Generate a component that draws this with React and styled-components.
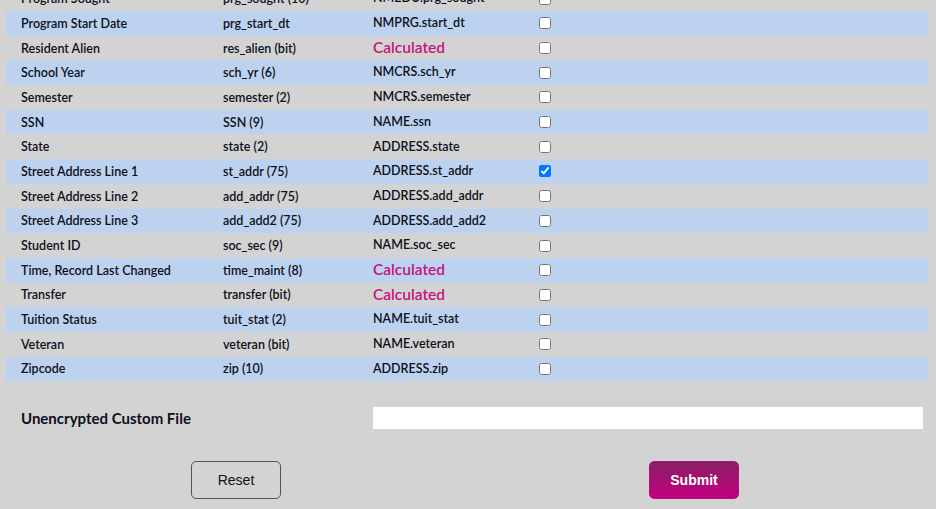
import React from 'react';
import styled, { createGlobalStyle } from 'styled-components';

const GlobalStyle = createGlobalStyle`
    body {
        margin: 0;
        background: #d3d3d3;
        font-family: Lato, "Open Sans", sans-serif;
        color: #0f0f1a;
    }
`;

const Page = styled.div`
    padding: 0 8px 0 6px;
    margin-top: -13.7px;
`;

const Table = styled.div`
    display: flex;
    flex-direction: column;
`;

const Row = styled.div`
    display: grid;
    grid-template-columns: 202px 150px 166px 1fr;
    align-items: center;
    height: 24.7px;
    background: ${p => (p.$striped ? '#bcd2ee' : 'transparent')};
    font-size: 12.5px;
    font-weight: 600;

    > * {
        padding-left: 15px;
    }
`;

const Source = styled.span`
    color: ${p => (p.$calc ? '#c4137f' : 'inherit')};
    font-size: ${p => (p.$calc ? '15.5px' : 'inherit')};
    line-height: 1;
`;

const Check = styled.span`
    display: flex;
    align-items: center;

    input {
        margin: 0;
        width: 12px;
        height: 12px;
    }
`;

const FileRow = styled.div`
    display: grid;
    grid-template-columns: 352px 1fr;
    align-items: center;
    margin-top: 26px;
    padding-right: 5px;

    label {
        padding-left: 15px;
        font-size: 15px;
        font-weight: 700;
    }
`;

const TextInput = styled.input`
    margin-left: 15px;
    height: 22px;
    box-sizing: border-box;
    border: none;
    background: #fff;
    outline: none;
`;

const Buttons = styled.div`
    display: grid;
    grid-template-columns: 1fr 1fr;
    margin: 32px 5px 0 1px;
    justify-items: center;
`;

const Button = styled.button`
    width: 90px;
    height: 38px;
    border-radius: 5px;
    font-family: "Liberation Sans", Arial, sans-serif;
    font-size: 14px;
    cursor: pointer;
    border: 1px solid ${p => (p.$primary ? '#b0107a' : '#555')};
    background: ${p => (p.$primary ? 'linear-gradient(#8a1f64, #c3007f)' : 'transparent')};
    color: ${p => (p.$primary ? '#fff' : '#111')};
    font-weight: ${p => (p.$primary ? 700 : 400)};
`;

const fields = [
    ['Program Sought', 'prg_sought (10)', 'NMEDU.prg_sought'],
    ['Program Start Date', 'prg_start_dt', 'NMPRG.start_dt'],
    ['Resident Alien', 'res_alien (bit)', null],
    ['School Year', 'sch_yr (6)', 'NMCRS.sch_yr'],
    ['Semester', 'semester (2)', 'NMCRS.semester'],
    ['SSN', 'SSN (9)', 'NAME.ssn'],
    ['State', 'state (2)', 'ADDRESS.state'],
    ['Street Address Line 1', 'st_addr (75)', 'ADDRESS.st_addr', true],
    ['Street Address Line 2', 'add_addr (75)', 'ADDRESS.add_addr'],
    ['Street Address Line 3', 'add_add2 (75)', 'ADDRESS.add_add2'],
    ['Student ID', 'soc_sec (9)', 'NAME.soc_sec'],
    ['Time, Record Last Changed', 'time_maint (8)', null],
    ['Transfer', 'transfer (bit)', null],
    ['Tuition Status', 'tuit_stat (2)', 'NAME.tuit_stat'],
    ['Veteran', 'veteran (bit)', 'NAME.veteran'],
    ['Zipcode', 'zip (10)', 'ADDRESS.zip'],
];

const App = () => {
    return (
        <Page>
            <GlobalStyle />
            <Table>
                {fields.map(([name, col, src, checked], i) => (
                    <Row key={name} $striped={i % 2 === 1}>
                        <span>{name}</span>
                        <span>{col}</span>
                        <Source $calc={!src}>{src || 'Calculated'}</Source>
                        <Check>
                            <input type="checkbox" defaultChecked={!!checked} />
                        </Check>
                    </Row>
                ))}
            </Table>
            <FileRow>
                <label>Unencrypted Custom File</label>
                <TextInput type="text" />
            </FileRow>
            <Buttons>
                <Button type="reset">Reset</Button>
                <Button $primary type="submit">Submit</Button>
            </Buttons>
        </Page>
    );
};

export default App;
